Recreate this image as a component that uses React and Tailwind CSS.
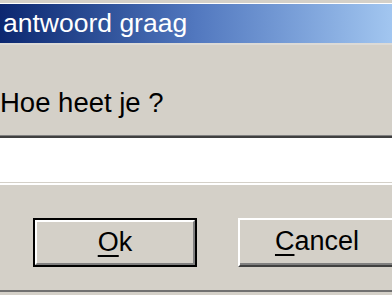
import React from "react";

export default function App() {
  const font = { fontFamily: '"Liberation Sans", Arial, sans-serif' };
  return (
    <div className="w-[392px] h-[295px] overflow-hidden bg-[#d4d0c8] flex flex-col" style={font}>
      <div className="h-[3px] bg-[#d4d0c8]" />
      <div className="h-px bg-white" />
      <div className="h-[39px] bg-gradient-to-r from-[#0c2770] via-[#5278bf] to-[#a2c6f0] pl-[3px] text-white text-[26.5px] leading-[39px] whitespace-nowrap">
        antwoord graag
      </div>
      <div className="h-[2px] bg-[#dcdad6]" />
      <div className="flex flex-col flex-1">
        <div className="mt-[43px] text-[27.5px] leading-[30px] text-black whitespace-nowrap">
          Hoe heet je ?
        </div>
        <div className="mt-[17px] border-t border-t-[#808080] border-b-2 border-b-white">
          <div className="h-[47px] bg-white border-t-2 border-t-[#404040] border-b border-b-[#d4d0c8]" />
        </div>
        <div className="mt-[33px] flex pl-[33px] gap-[41px]">
          <div className="w-[164px] h-[49px] shrink-0 border-2 border-black">
            <div className="h-full border-t-2 border-l-2 border-t-white border-l-white border-b-2 border-r-2 border-b-[#808080] border-r-[#808080] flex items-center justify-center text-[27px] text-black">
              <span>
                <span className="underline decoration-2 underline-offset-[4px]">O</span>k
              </span>
            </div>
          </div>
          <div className="w-[160px] h-[49px] shrink-0 border-t-2 border-l-2 border-t-white border-l-white border-b-2 border-r-2 border-b-[#404040] border-r-[#404040]">
            <div className="h-full border-b-2 border-r-2 border-b-[#808080] border-r-[#808080] flex items-center justify-center text-[27px] text-black">
              <span>
                <span className="underline decoration-2 underline-offset-[4px]">C</span>ancel
              </span>
            </div>
          </div>
        </div>
        <div className="mt-auto mb-[3px] h-[2px] bg-[#707070]" />
      </div>
    </div>
  );
}
